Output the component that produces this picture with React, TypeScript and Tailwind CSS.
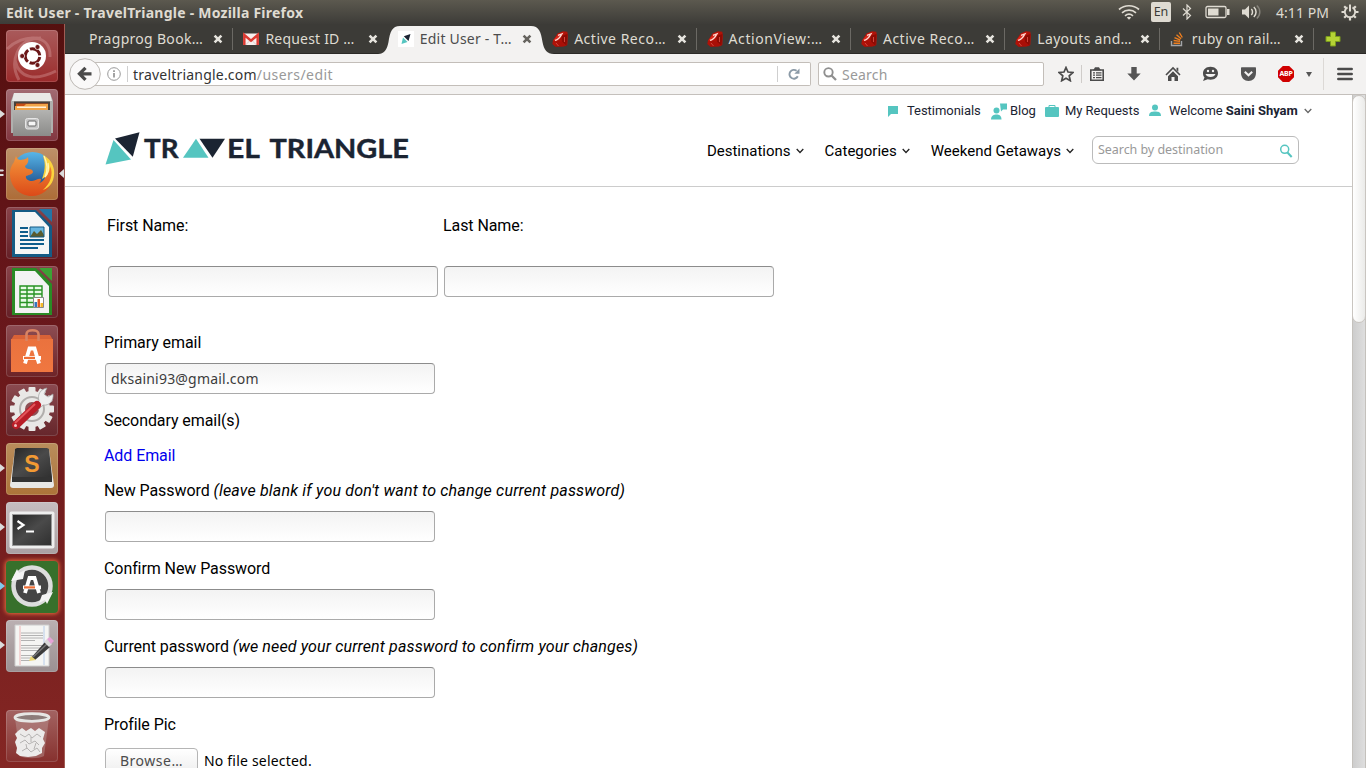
import React from 'react';

const UBUNTU = "font-['Noto_Sans','Open_Sans',sans-serif]";

function Ruby() {
  return (
    <svg width="16" height="16" viewBox="0 0 16 16">
      <path d="M1 9.500 5.500 2.500 11 .3 15.300 .8 15.900 5 15.300 14 11.500 15.500 3.500 15.800 .3 13Z" fill="#b01208" />
      <path d="M1.200 9.600 6.500 3 12 1 9.500 5 4.500 9.500Z" fill="#d8281b" />
      <path d="M9.500 5 15.500 3 14.500 14.500 10 11Z" fill="#8d0b04" />
      <path d="M4.500 9.500 10 11 14.500 15 3.500 15.500Z" fill="#a90f07" />
      <path d="M3 9.300C5 9 8.500 6.500 9.500 3.500M6 4.300 11 2.500" fill="none" stroke="#ffd9d2" strokeWidth="1.300" />
      <path d="M4 12 6.500 15M12.500 6v5" fill="none" stroke="#e0564b" strokeWidth=".8" />
    </svg>
  );
}

function Gmail() {
  return (
    <svg width="16" height="16" viewBox="0 0 16 16">
      <rect x="0" y="2.500" width="16" height="11.500" rx=".5" fill="#f7efee" />
      <path d="M2.500 14 8 8.500l5.500 5.500" fill="none" stroke="#d9c9c7" />
      <path d="M1.300 14V4L8 9.700 14.700 4v10" fill="none" stroke="#dc3a32" strokeWidth="2.500" />
    </svg>
  );
}

function TriangleFavicon() {
  return (
    <svg width="16" height="16" viewBox="0 0 16 16">
      <path fill="#fff" d="M0 0h16v16H0z" />
      <path fill="#55c5c0" d="M5 6.500 9.500 11 3.500 13Z" />
      <path fill="#1b2432" d="M5.800 5.200 12.500 3 10.500 10Z" />
    </svg>
  );
}

function StackOverflow() {
  return (
    <svg width="16" height="16" viewBox="0 0 16 16" fill="none">
      <path d="M1.500 10v4.500h10V10" stroke="#a3a5a8" strokeWidth="1.400" />
      <path d="M3.500 12.300h6.500M3.600 9.500l6.400.9M4.500 6.600l5.800 2.500M6.500 3.800l4.600 4M9.300 1.500l3 5" stroke="#ef7f1f" strokeWidth="1.400" />
    </svg>
  );
}

function Close({ dark = false }: { dark?: boolean }) {
  return (
    <svg width="10" height="10" viewBox="0 0 10 10" className="shrink-0">
      <path d="M1.600 1.600 8.400 8.400M8.400 1.600 1.600 8.400" stroke={dark ? '#66645f' : '#e6e4de'} strokeWidth="2.600" />
    </svg>
  );
}

type TabData = { label: string; icon?: React.ReactNode; active?: boolean; sep?: boolean; track: string };

const tabs: TabData[] = [
  { label: 'Pragprog Book…', sep: true, track: 'tracking-[0.3px]' },
  { label: 'Request ID …', icon: <Gmail />, track: 'tracking-[0.2px]' },
  { label: 'Edit User - T…', icon: <TriangleFavicon />, active: true, track: 'tracking-[0.2px]' },
  { label: 'Active Reco…', icon: <Ruby />, sep: true, track: 'tracking-[0.5px]' },
  { label: 'ActionView:…', icon: <Ruby />, sep: true, track: 'tracking-[0.6px]' },
  { label: 'Active Reco…', icon: <Ruby />, sep: true, track: 'tracking-[0.5px]' },
  { label: 'Layouts and…', icon: <Ruby />, sep: true, track: 'tracking-[0.3px]' },
  { label: 'ruby on rail…', icon: <StackOverflow />, sep: true, track: 'tracking-[0.25px]' },
];

function Tab({ t }: { t: TabData }) {
  return (
    <div className="relative flex h-[30px] w-[154.4px] shrink-0 items-center pl-[10px]">
      {t.active && (
        <svg className="absolute -left-[10px] top-[2px]" width="176" height="28" viewBox="0 0 176 28">
          <path d="M0 28C6 28 9 24 10.500 16 12 6 14 0 22 0H153C161 0 163 6 164.500 16 166 24 169 28 176 28Z" fill="#f3f2f1" />
        </svg>
      )}
      {t.icon && <span className="relative mr-[6px] h-4 w-4 shrink-0">{t.icon}</span>}
      <span className={'relative w-0 flex-1 whitespace-nowrap text-[14px] leading-[20px] ' + t.track + (t.active ? ' text-[#4c4c4c]' : ' text-[#dfdbd2]')}>
        {t.label}
      </span>
      <span className="relative mr-[9px] flex"><Close dark={t.active} /></span>
      <span className={'h-[22px] w-px ' + (t.sep ? 'bg-[#6b6964]' : 'bg-transparent')} />
    </div>
  );
}

function Indicators() {
  return (
    <div className="flex h-full items-center text-[#dfdbd2]">
      <svg width="22" height="16" viewBox="0 0 22 16" fill="none" stroke="#dfdbd2" strokeWidth="1.700">
        <path d="M1 5.500C6.500.5 15.500.5 21 5.500" />
        <path d="M4 8.800c4-3.500 10-3.500 14 0" />
        <path d="M7 11.800c2.400-2 5.600-2 8 0" />
        <path d="M8.800 13.500 11 15.800l2.200-2.300c-1.300-1-3.100-1-4.400 0Z" fill="#dfdbd2" stroke="none" />
      </svg>
      <span className="ml-[11px] flex h-5 w-5 items-center justify-center rounded-[2px] bg-[#dfdbd2] text-[12.500px] text-[#3c3b37]">En</span>
      <svg className="ml-[11px]" width="10" height="16" viewBox="0 0 10 16" fill="none" stroke="#dfdbd2" strokeWidth="1.200">
        <path d="M1 4.500 8.500 11.500 5 15V1l3.500 3.500L1 11.500" />
      </svg>
      <svg className="ml-[13px]" width="25" height="14" viewBox="0 0 25 14">
        <rect x="1" y="1.500" width="20" height="11" rx="1.500" fill="none" stroke="#dfdbd2" strokeWidth="1.300" />
        <path d="M3 3.500h10.500v7H3zM22 4h2.500v6H22z" fill="#dfdbd2" />
      </svg>
      <svg className="ml-[11px]" width="20" height="16" viewBox="0 0 20 16" fill="none" stroke="#dfdbd2" strokeWidth="1.500">
        <path d="M1 5.500h3l4-4v13l-4-4H1z" fill="#dfdbd2" stroke="none" />
        <path d="M10.300 5c1.600 1.500 1.600 4.500 0 6M12.800 3c3 2.500 3 7.500 0 10" />
        <path d="M15.800 1.500c4 3.500 4 9.500 0 13" stroke="#85827a" />
      </svg>
      <span className="ml-[15px] w-[53px] whitespace-nowrap text-[14px] tracking-[0.05px]">4:11 PM</span>
      <svg className="ml-[12px]" width="18" height="18" viewBox="0 0 18 18" fill="none" stroke="#dfdbd2">
        <path d="M6.500 4.400a5.200 5.200 0 1 0 5 0" strokeWidth="1.900" />
        <path d="M9 1.500v7" strokeWidth="2" />
        <path d="M3.200 3.200 5 5M14.800 3.200 13 5M.5 9h3M14.500 9h3M3.200 14.800 5 13M14.800 14.800 13 13M9 14.500v3" strokeWidth="2.200" />
      </svg>
    </div>
  );
}

function Toolbar() {
  return (
    <div className="relative flex h-[41px] shrink-0 items-center border-b border-[#c4c0bc] bg-[#f3f2f1] pl-[4px]">
      <svg className="relative z-10" width="32" height="32" viewBox="0 0 32 32">
        <circle cx="16" cy="16" r="15.300" fill="#faf9f9" stroke="#bcb8b4" />
        <path d="M22.500 15.800H11M16.500 9.800l-6 6 6 6" fill="none" stroke="#4b4b4b" strokeWidth="3.300" />
      </svg>
      <div className="-ml-[6px] flex h-6 w-[716px] items-center rounded-r-[2px] border border-l-0 border-[#c3beb9] bg-white pl-[12px]">
        <svg width="14" height="14" viewBox="0 0 14 14">
          <circle cx="7" cy="7" r="6.300" fill="none" stroke="#999" />
          <path d="M6.100 6h1.800v4.500H6.100zM6.100 3.200h1.800v1.700H6.100z" fill="#999" />
        </svg>
        <span className="ml-[6px] h-4 w-px bg-[#cfcfcf]" />
        <span className="ml-[5px] flex-1 whitespace-nowrap text-[14px] tracking-[0.2px] text-[#333]">
          traveltriangle.com<span className="tracking-[0.45px] text-[#999]">/users/edit</span>
        </span>
        <span className="h-4 w-px bg-[#cfcfcf]" />
        <svg className="ml-[10px] mr-[10px]" width="12" height="12" viewBox="0 0 12 12">
          <path d="M9.800 8.300A4.400 4.400 0 1 1 8.600 2.800" fill="none" stroke="#8b9aa7" strokeWidth="1.900" />
          <path d="M11.500.5v5.200H6.300Z" fill="#8b9aa7" />
        </svg>
      </div>
      <div className="ml-[7px] flex h-6 w-[226px] items-center rounded-[2px] border border-[#c3beb9] bg-white pl-[4px]">
        <svg width="14" height="14" viewBox="0 0 14 14" fill="none" stroke="#8f8f8f">
          <circle cx="5.500" cy="5.300" r="4.200" strokeWidth="1.900" />
          <path d="m8.500 8.500 4.500 4.500" strokeWidth="2.300" />
        </svg>
        <span className="ml-[5px] text-[14px] tracking-[0.2px] text-[#999]">Search</span>
      </div>
      <svg className="ml-[14px]" width="16" height="16" viewBox="0 0 16 16">
        <path d="m8 1.500 2 4.500 4.900.5-3.700 3.300 1.100 4.900L8 12.200l-4.300 2.500 1.100-4.900L1.100 6.500 6 6Z" fill="none" stroke="#4b4b4b" strokeWidth="1.700" />
      </svg>
      <span className="ml-[7px] h-[18px] w-px bg-[#cfccc9]" />
      <svg className="ml-[7px]" width="16" height="16" viewBox="0 0 16 16">
        <path d="M1.800 4h12.400v10.200H1.800z" fill="none" stroke="#4b4b4b" strokeWidth="1.600" />
        <path d="M4 4.500 6 1.200h4l2 3.300z" fill="#4b4b4b" />
        <path d="M4 6.800h2M7 6.800h5.500M4 9.200h2M7 9.200h5.500M4 11.700h2M7 11.700h5.500" stroke="#4b4b4b" strokeWidth="1.200" />
      </svg>
      <svg className="ml-[21px]" width="16" height="16" viewBox="0 0 16 16">
        <path d="M5.300 1h5.400v6.500h4L8 14.500 1.300 7.500h4z" fill="#555" />
      </svg>
      <svg className="ml-[23px]" width="16" height="16" viewBox="0 0 16 16">
        <path d="M1 9 8 2l7 7" fill="none" stroke="#4b4b4b" strokeWidth="1.600" />
        <path d="M8 5.300 13 10.200V15H9.500v-4h-3v4H3v-4.800zM11.500 1.800h1.800v4l-1.800-1.800z" fill="#4b4b4b" />
      </svg>
      <svg className="ml-[21px]" width="17" height="16" viewBox="0 0 17 16">
        <path d="M8.500.8C13 .8 16 3.700 16 7.300s-3 6.500-7.500 6.500c-1 0-2-.2-2.800-.5L1 15l1.500-3.500C1.300 10.300 1 8.800 1 7.300 1 3.700 4 .8 8.500.8Z" fill="#4b4b4b" />
        <circle cx="6" cy="5" r="1.200" fill="#f3f2f1" /><circle cx="11" cy="5" r="1.200" fill="#f3f2f1" />
        <path d="M3.500 8h10c-1 4-9 4-10 0Z" fill="#f3f2f1" />
      </svg>
      <svg className="ml-[21px]" width="17" height="16" viewBox="0 0 17 16">
        <path d="M2 1.300h13c.7 0 1 .3 1 1V7c0 5-3.500 8-7.500 8S1 12 1 7V2.300c0-.7.3-1 1-1Z" fill="#555" />
        <path d="m4.800 5.700 3.700 3.600 3.700-3.600" fill="none" stroke="#f3f2f1" strokeWidth="2" />
      </svg>
      <span className="ml-[21px] flex h-4 w-4 items-center justify-center bg-[#d00000] text-[7px] font-bold tracking-[-0.2px] text-white [clip-path:polygon(30%_0,70%_0,100%_30%,100%_70%,70%_100%,30%_100%,0_70%,0_30%)]">ABP</span>
      <svg className="ml-[12px]" width="6" height="5" viewBox="0 0 6 5"><path d="M0 0h6L3 5z" fill="#555" /></svg>
      <span className="ml-[11px] h-8 w-px bg-[#dcd9d6]" />
      <svg className="ml-[13px]" width="16" height="14" viewBox="0 0 16 14"><path d="M1.300 2h13.400M1.300 7h13.400M1.300 12h13.400" stroke="#4b4b4b" strokeWidth="2.500" strokeLinecap="round" /></svg>
    </div>
  );
}

function Gear({ cx, cy }: { cx: number; cy: number }) {
  return (
    <g transform={`translate(${cx} ${cy})`}>
      {[0, 30, 60, 90, 120, 150].map((a) => (
        <rect key={a} x="-3.500" y="-22" width="7" height="44" rx="1" fill="#e9e8e6" transform={`rotate(${a})`} />
      ))}
      <circle r="18" fill="#e9e8e6" />
      <circle r="12" fill="none" stroke="#b1aeac" strokeWidth="2" />
      <circle r="7" fill="#8d5055" />
    </g>
  );
}

function LetterA({ y = 0 }: { y?: number }) {
  return (
    <g transform={`translate(0 ${y})`}>
      <path d="M19 33 23.500 18h5L33 33" fill="none" stroke="#fff" strokeWidth="3.800" />
      <rect x="17" y="25.500" width="18" height="3.800" fill="#fff" />
      <rect x="18" y="26.300" width="11" height="2.200" fill="#ee6e35" />
    </g>
  );
}

const launcher: { name: string; tile: string; left?: string; art: React.ReactNode }[] = [
  {
    name: 'dash', tile: 'bg-linear-to-b from-[#a95a5b] to-[#9b2a2b]',
    art: (
      <>
        <g fill="none" stroke="#d89b9a" strokeOpacity=".4" strokeWidth="3">
          <path d="M1 19C16 4 45 2 44 27M13 50C3 32 11 8 35 8M50 41C30 51 13 49 9 30" />
        </g>
        <circle cx="26" cy="26" r="14" fill="#fff" />
        <circle cx="26.500" cy="26" r="7.300" fill="none" stroke="#6b1718" strokeWidth="3" strokeDasharray="13.300 2" strokeDashoffset="-1" />
        <g fill="#6b1718" stroke="#fff" strokeWidth=".7"><circle cx="16.200" cy="26" r="2.500" /><circle cx="31.500" cy="17" r="2.500" /><circle cx="31.500" cy="35" r="2.500" /></g>
      </>
    ),
  },
  {
    name: 'files', tile: 'bg-linear-to-b from-[#a26b72] to-[#823640]', left: '#dcdcdc',
    art: (
      <>
        <path d="M8 4h36l3 8v32H5V12z" fill="#b0b0ae" /><path d="M8 4h36l2 8H6z" fill="#e9e9e7" />
        <path d="M8 12.500h36V22H8z" fill="#48413b" /><path d="M10 14.500h32V22H10z" fill="#c94e14" /><path d="M9 17h9l2-2h22v7H9z" fill="#f1a448" /><path d="M11 17.500h29v1.500H11z" fill="#fff2d9" />
        <path d="M7 21h38v26H7z" fill="url(#metal)" />
        <rect x="19.500" y="29.500" width="13" height="10.500" rx="2" fill="#c4c4c4" stroke="#e6e6e6" /><rect x="22" y="32" width="8" height="5" rx="1" fill="#f6f6f6" stroke="#666" />
      </>
    ),
  },
  {
    name: 'firefox', tile: 'bg-linear-to-b from-[#bd9169] to-[#ad6c37]', left: 'double',
    art: (
      <>
        <circle cx="26.500" cy="25" r="21" fill="url(#globe)" />
        <path d="M37 9c8 4 12 12 10 21-2 11-11 18-21 18C13 48 4 38 4 26c0-6 2-9 4-12l2-6c1 3 3 4 5 4 2-1 5 0 7-3 1 4 0 7-3 9 0 2 2 3 4 3 2 0 4 1 4 3-1 3-5 3-7 4-1 3 3 5 6 5 4 0 6-3 9-2 0 2-1 4-3 5 8-3 12-12 5-27z" fill="url(#fox)" />
        <path d="M37 7c2 6 3 14-1 24 6-3 8-8 8-13 4 8 0 18-7 24 8-3 12-10 11-20-1-7-5-12-11-15Z" fill="#fbd33d" />
        <path d="M38 8c3 6 4 14 1 21 4-4 4-9 3-14" fill="none" stroke="#fff5b5" strokeWidth="1.300" />
      </>
    ),
  },
  {
    name: 'writer', tile: 'bg-linear-to-b from-[#88434a] to-[#652027]',
    art: (
      <>
        <path d="M6 3h24l16 16v31H6z" fill="#155b85" /><path d="M9 5h20l14 15v27H9z" fill="#f6f6f6" /><path d="M33 2h13v13z" fill="#2475a5" />
        <path d="M14 21h8M14 25h8M14 29h8M14 33h24M14 37h24M14 41h18" stroke="#0f5d8c" strokeWidth="2" />
        <path d="M24 20h14v10H24z" fill="#67b5df" /><path d="m24 30 4-6 3 3 4-4 3 5v2z" fill="#5a5a2e" /><path d="M24 20h14v10H24z" fill="none" stroke="#155b85" />
      </>
    ),
  },
  {
    name: 'calc', tile: 'bg-linear-to-b from-[#88434a] to-[#652027]',
    art: (
      <>
        <path d="M6 2h24l16 16v31H6z" fill="#2a8b25" /><path d="M9 5h20l14 15v27H9z" fill="#f3f3f3" /><path d="M33 2h13v13z" fill="#3ca235" />
        <path d="M14 20h22v21H14z" fill="#e9fbe7" /><path d="M14 20h22v21H14zM14 24h22M14 28h22M14 32h22M14 36.500h22M21 20v21M28 20v21" fill="none" stroke="#279323" strokeWidth="1.400" />
        <path d="M27.500 31.500h10v10h-10z" fill="#fff" stroke="#888" /><path d="M28.500 36h2.500v5h-2.500z" fill="#3476bf" /><path d="M31.500 33h2.500v8h-2.500z" fill="#e25822" /><path d="M34.500 37h2.500v4h-2.500z" fill="#f5b927" />
      </>
    ),
  },
  {
    name: 'software', tile: 'bg-linear-to-b from-[#8d4d53] to-[#6d2327]',
    art: (
      <>
        <path d="M8 10h36l3 5H5z" fill="#d96237" /><path d="M5 14h42v33H5z" fill="url(#bag)" />
        <path d="M20.500 16V9c0-5 12-5 12 0v7" fill="none" stroke="#d98362" strokeWidth="2.600" />
        <LetterA y={5.5} />
      </>
    ),
  },
  {
    name: 'settings', tile: 'bg-linear-to-b from-[#8b4a50] to-[#66262b]',
    art: (
      <>
        <Gear cx={26} cy={25} />
        <path d="m28 22 5-5c-2-7 2-12 8-13l-3 6 4 3 5-3c1 7-4 12-10 11l-5 5z" fill="#eee" stroke="#a0a0a0" strokeWidth=".7" />
        <path d="M10 41 31 21" stroke="#b91d27" strokeWidth="8" strokeLinecap="round" /><path d="M9 39 29 20" stroke="#e2555a" strokeWidth="2" />
        <circle cx="9.500" cy="41.500" r="1.500" fill="#f2c5c5" />
      </>
    ),
  },
  {
    name: 'sublime', tile: 'bg-linear-to-b from-[#b98d5c] to-[#ad7439]', left: '#dcdcdc',
    art: (
      <>
        <path d="M9 6h34l5 36c0 2-1 3-3 3H7c-2 0-3-1-3-3z" fill="#e8e8e6" /><path d="M11 5h30l2 1 3 28H6L9 6z" fill="url(#dark)" /><path d="M6 34h40v5H6z" fill="#333" />
        <text x="26" y="28.500" textAnchor="middle" className="fill-[#f29a33] font-['Liberation_Sans',sans-serif] text-[23px] font-bold">S</text>
      </>
    ),
  },
  {
    name: 'terminal', tile: 'bg-linear-to-b from-[#c6bec0] to-[#aaa0a2]', left: '#dcdcdc',
    art: (
      <>
        <rect x="3.500" y="9.500" width="45" height="37" rx="2" fill="#eee" /><rect x="6" y="12" width="40" height="32" fill="#999" /><rect x="7" y="13" width="38" height="30" fill="url(#dark)" />
        <path d="m11.500 19 6 4-6 4M20 29.500h8" fill="none" stroke="#fff" strokeWidth="2.200" />
      </>
    ),
  },
  {
    name: 'updater', tile: 'bg-[#37702b] shadow-[0_0_4px_1px_#ec7140]', left: '#7fc9ee',
    art: (
      <>
        <circle cx="26" cy="25" r="18" fill="#454545" /><circle cx="26" cy="25" r="18.500" fill="none" stroke="#ddd" strokeWidth="4.500" />
        <path d="m5 20 6-12 2 4 6-3-2 9zM47 31l-6 12-2-4-6 3 3-8z" fill="#f4f4f4" />
        <LetterA y={-1} />
      </>
    ),
  },
  {
    name: 'editor', tile: 'bg-linear-to-b from-[#bbb0b2] to-[#9b9092]', left: '#dcdcdc',
    art: (
      <>
        <path d="M9 5h34v41H9z" fill="#f5f5f3" stroke="#ccc" />
        <path d="M15 13h22M15 15.500h22M15 18h22M15 20.500h14M15 25.500h22M15 28h22M15 30.500h20M15 35.500h16M15 38h12M15 40.500h9" stroke="#b2b2b2" /><path d="M14 6v39" stroke="#efb5b5" /><path d="M38 6v39" stroke="#b8cdea" />
        <path d="m25 38 14-16 5 5-15 13z" fill="#3b3b3b" /><path d="m27 37 14-13" stroke="#777" strokeWidth="1.500" /><path d="m23 41 2-5 5 4z" fill="#e9d574" /><path d="m38 22 3-3 5 5-3 3z" fill="#d9d9d9" /><path d="m41 19 3-2 4 4-3 3z" fill="#e6a2d6" />
      </>
    ),
  },
  {
    name: 'trash', tile: 'bg-linear-to-b from-[#a36362] to-[#86302e]',
    art: (
      <>
        <path d="M9 8h34l-5 38c-5 3-19 3-24 0z" fill="#c1a4a2" fillOpacity=".4" />
        <path d="m12 21 4-3 4 3 5-3 4 3 4-3 6 4-2 7 2 4-3 5v5l-6 3-8 1-8-1-4-3 1-5-2-6 2-4-2-4z" fill="#ecebea" />
        <path d="m14 24 5 3 4-3 3 4 5-4 4 3M14 33l5-3 4 4 6-3 4 4M16 41l5-3 4 4 6-4 3 4M25 27v5M20 34l1 5M30 33l-2 6" fill="none" stroke="#b5b3b2" />
        <ellipse cx="26" cy="7.500" rx="17" ry="3.800" fill="#8c7c7a" stroke="#e6e6e4" strokeWidth="2.800" />
      </>
    ),
  },
];

function Launcher() {
  return (
    <div className="flex w-[65px] shrink-0 flex-col gap-[7px] border-r border-[#a05c54] bg-linear-to-b from-[#55100f] from-0% via-[#641519] via-30% to-[#842623] pl-[6px] pt-[6px]">
      <svg className="absolute" width="0" height="0">
        <defs>
          <linearGradient id="metal" x2="0" y2="1"><stop stopColor="#b3b3b1" /><stop offset="1" stopColor="#8b8b89" /></linearGradient>
          <linearGradient id="globe" x2="0" y2="1"><stop stopColor="#58b6e8" /><stop offset="1" stopColor="#123a79" /></linearGradient>
          <linearGradient id="fox" x2="0" y2="1"><stop stopColor="#f4953a" /><stop offset="1" stopColor="#dc4a18" /></linearGradient>
          <linearGradient id="bag" x2="0" y2="1"><stop stopColor="#ea723e" /><stop offset="1" stopColor="#f07740" /></linearGradient>
          <linearGradient id="dark" x2="1" y2="1"><stop stopColor="#252525" /><stop offset=".5" stopColor="#4a4a4a" /><stop offset="1" stopColor="#303030" /></linearGradient>
        </defs>
      </svg>
      {launcher.map((l) => (
        <div key={l.name} className={'relative h-[52px] w-[52px] shrink-0 rounded-[4px] ' + (l.name === 'updater' ? '' : 'ring-1 ring-inset ring-white/15 ') + l.tile + (l.name === 'trash' ? ' mt-[31px]' : '')}>
          <svg width="52" height="52" viewBox="0 0 52 52">{l.art}</svg>
          {l.left && l.left !== 'double' && (
            <svg className="absolute -left-[6px] top-[20px]" width="5" height="10" viewBox="0 0 5 10"><path d="M0 1 5 5 0 9z" fill={l.left} /></svg>
          )}
          {l.left === 'double' && (
            <>
              <svg className="absolute -left-[6px] top-[21px]" width="5" height="8" viewBox="0 0 5 8"><path d="M0 .5h3l1 1-1 1H0zM0 5h3l1 1-1 1H0z" fill="#dcdcdc" /></svg>
              <svg className="absolute -right-[6px] top-[21px]" width="5" height="9" viewBox="0 0 5 9"><path d="M5 0v9L0 4.500z" fill="#dcdcdc" /></svg>
            </>
          )}
        </div>
      ))}
    </div>
  );
}

function Chevron({ s = 8, c = '#222' }: { s?: number; c?: string }) {
  return (
    <svg width={s} height={s} viewBox="0 0 8 8"><path d="m.7 2 3.300 3.500L7.300 2" fill="none" stroke={c} strokeWidth="1.300" /></svg>
  );
}

function Logo() {
  return (
    <svg width="306" height="34" viewBox="0 0 306 34" className="fill-[#1b2432] font-['Lato',sans-serif] text-[26px] font-bold">
      <path d="M8.500 9 26 28.500.5 33.500z" fill="#55c5c0" />
      <path d="M10 7.500 34.500 1.200 27.800 25.800z" />
      <g stroke="#1b2432" strokeWidth=".4">
        <text x="39" y="26.800" textLength="34.500" lengthAdjust="spacingAndGlyphs">TR</text>
        <text x="122" y="26.800" textLength="33" lengthAdjust="spacingAndGlyphs">EL</text>
        <text x="164.500" y="26.800" textLength="139.500" lengthAdjust="spacingAndGlyphs">TRIANGLE</text>
      </g>
      <path d="M91 7.800 103.500 26.800H78z" fill="#55c5c0" />
      <path d="M94.500 7.800H120L107.500 26.800z" />
    </svg>
  );
}

function Header() {
  return (
    <header className="flex h-[92px] shrink-0 items-start border-b border-[#ccc] pl-[40px] font-['Roboto',sans-serif]">
      <div className="mt-[36px]"><Logo /></div>
      <div className="flex flex-1 flex-col items-end pr-[53px]">
        <div className="-mr-[14px] mt-[6px] flex h-5 w-[426px] items-center whitespace-nowrap text-[13px] tracking-[-0.04px] text-[#1b2432]">
          <svg width="11" height="12" viewBox="0 0 11 12"><path d="M1 1h10v8H4l-3 3z" fill="#55c5c0" /></svg>
          <span className="ml-[9px] w-[73px]">Testimonials</span>
          <svg className="ml-[10px]" width="18" height="17" viewBox="0 0 18 17" fill="#55c5c0"><path d="M10 .5h7v6h-4l-2 2z" /><circle cx="6.500" cy="7.500" r="3" /><path d="M1 16.500c0-4 3-5 5.500-5s5 1 5 5z" /></svg>
          <span className="ml-[2px] w-[26px]">Blog</span>
          <svg className="ml-[9px]" width="14" height="14" viewBox="0 0 14 14"><rect y="3" width="14" height="10" rx="1" fill="#55c5c0" /><path d="M4 4V1.500h6V4" fill="none" stroke="#55c5c0" /></svg>
          <span className="ml-[6px] w-[74px]">My Requests</span>
          <svg className="ml-[10px]" width="12" height="14" viewBox="0 0 12 14" fill="#55c5c0"><circle cx="6" cy="3.500" r="3" /><path d="M0 12c0-4 3-4.500 6-4.500s6 .5 6 4.500z" /></svg>
          <span className="ml-[8px] w-[129px]">Welcome <b>Saini Shyam</b></span>
          <span className="ml-[6px]"><Chevron s={8} c="#666" /></span>
        </div>
        <div className="mt-[15px] flex h-[28px] items-center whitespace-nowrap text-[15px] text-black">
          <span className="mt-[2px]">Destinations</span><span className="ml-[5px] mr-[21px] mt-[2px]"><Chevron s={8} /></span>
          <span className="mt-[2px]">Categories</span><span className="ml-[5px] mr-[21px] mt-[2px]"><Chevron s={8} /></span>
          <span className="mt-[2px]">Weekend Getaways</span><span className="ml-[5px] mr-[18px] mt-[2px]"><Chevron s={8} /></span>
          <div className={'flex h-[28px] w-[207px] items-center justify-between rounded-[6px] border border-[#bbb] pl-[5px] pr-[5px] text-[12.500px] text-[#999] ' + UBUNTU}>
            <span className="mt-px tracking-[-0.05px]">Search by destination</span>
            <svg className="mt-[2px]" width="14" height="14" viewBox="0 0 14 14" fill="none" stroke="#55c5c0" strokeWidth="1.500"><circle cx="5.700" cy="5.300" r="4" /><path d="m8.500 8.500 4.200 4.500" strokeWidth="2" /></svg>
          </div>
        </div>
      </div>
    </header>
  );
}

function Field({ value = '' }: { value?: string }) {
  return (
    <div className={'flex h-[31px] w-[330px] shrink-0 items-center rounded-[4px] border border-[#aaa] border-t-[#8c8c8c] bg-linear-to-b from-[#f3f3f3] to-white pl-[5px] text-[14px] tracking-[0.2px] text-[#3c3c3c] ' + UBUNTU}>
      {value}
    </div>
  );
}

function Label({ children }: { children: React.ReactNode }) {
  return <div className="flex h-[35px] shrink-0 items-center whitespace-pre tracking-[-0.08px]">{children}</div>;
}

export default function App() {
  return (
    <div className={'flex h-[768px] w-[1366px] flex-col overflow-hidden bg-white ' + UBUNTU}>
      <div className="flex h-6 shrink-0 items-center justify-between bg-linear-to-b from-[#5c594f] to-[#3d3c38] pl-[6px] pr-[7px]">
        <span className="whitespace-nowrap text-[14px] font-bold tracking-[0.24px] text-[#dfdbd2]">Edit User - TravelTriangle - Mozilla Firefox</span>
        <Indicators />
      </div>
      <div className="flex min-h-0 flex-1">
        <Launcher />
        <div className="flex min-w-0 flex-1 flex-col">
          <div className="flex h-[30px] shrink-0 items-center border-b border-[#2b2a27] bg-[#3c3b37] pl-[14px]">
            {tabs.map((t, i) => <Tab key={i} t={t} />)}
            <svg className="ml-[11px]" width="16" height="16" viewBox="0 0 16 16"><path d="M5.500 1h5v4.500H15v5h-4.500V15h-5v-4.500H1v-5h4.500z" fill="#b5d335" stroke="#7a9b1c" /></svg>
          </div>
          <Toolbar />
          <div className="flex min-h-0 flex-1">
            <div className="flex min-w-0 flex-1 flex-col overflow-hidden">
              <Header />
              <main className="flex flex-col pl-[39px] pt-[21px] font-['Roboto',sans-serif] text-[16px] text-black">
                <div className="flex gap-[6px] pl-[4px]">
                  <div className="flex w-[330px] flex-col gap-[23px]"><div className="-ml-px"><Label>First Name:</Label></div><Field /></div>
                  <div className="flex w-[330px] flex-col gap-[23px]"><div className="-ml-px"><Label>Last Name:</Label></div><Field /></div>
                </div>
                <div className="mt-[28px]"><Label>Primary email</Label></div>
                <div className="ml-px mt-[3px] mb-[9px]"><Field value="dksaini93@gmail.com" /></div>
                <Label>Secondary email(s)</Label>
                <Label><span className="text-[#0000ee]">Add Email</span></Label>
                <Label>New Password <i className="tracking-[0.18px]">(leave blank if you don't want to change current password)</i></Label>
                <div className="ml-px mt-[3px] mb-[9px]"><Field /></div>
                <Label>Confirm New Password</Label>
                <div className="ml-px mt-[3px] mb-[9px]"><Field /></div>
                <Label>Current password <i className="tracking-[0.13px]">(we need your current password to confirm your changes)</i></Label>
                <div className="ml-px mt-[3px] mb-[9px]"><Field /></div>
                <Label>Profile Pic</Label>
                <div className={'ml-px mt-[6px] flex h-[28px] items-center text-[14px] leading-[14px] ' + UBUNTU}>
                  <span className="flex h-[28px] w-[93px] items-center justify-center rounded-[4px] border border-[#b5b5b5] bg-linear-to-b from-white to-[#ededed] pb-[2px] tracking-[0.5px] text-[#4c4c4c]">Browse…</span>
                  <span className="ml-[6px] pb-[2px] tracking-[0.2px]">No file selected.</span>
                </div>
              </main>
            </div>
            <div className="w-[14px] shrink-0 border-x border-[#c4c1bc] bg-linear-to-r from-[#cdcdcd] to-[#dedede]">
              <div className="-mx-px h-[228px] rounded-[7px] border border-[#c9c5c0] bg-linear-to-r from-white to-[#ebebe9]" />
            </div>
          </div>
        </div>
      </div>
    </div>
  );
}
